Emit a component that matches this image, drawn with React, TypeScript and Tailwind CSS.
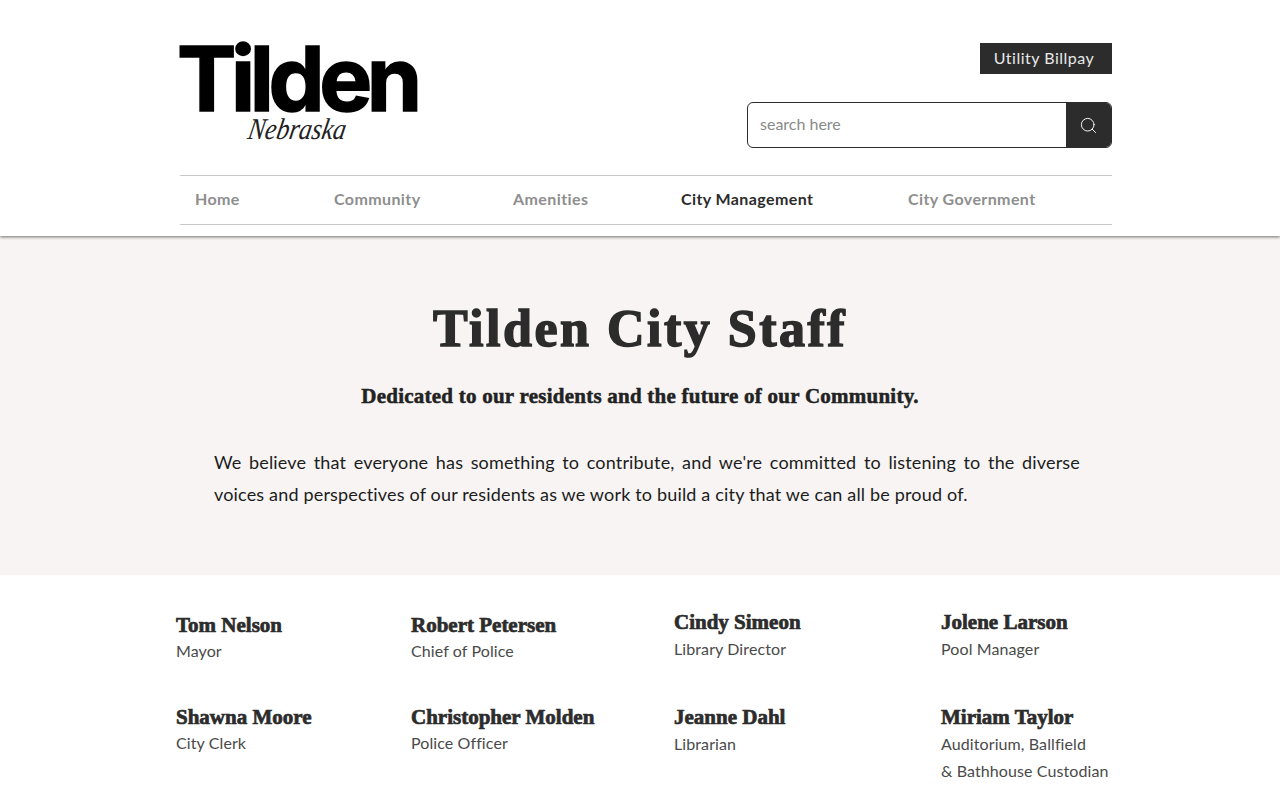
import { Search } from "lucide-react";

const navItems = [
  { label: "Home", width: "w-[139px]" },
  { label: "Community", width: "w-[179px]" },
  { label: "Amenities", width: "w-[168px]" },
  { label: "City Management", width: "w-[227px]", active: true },
  { label: "City Government", width: "w-[204px]" },
];

const staffColumns = [
  {
    width: "w-[235px]",
    top: "pt-[38px]",
    gap: "mb-[41px]",
    nameBox: "leading-[24px]",
    people: [
      { name: "Tom Nelson", role: ["Mayor"] },
      { name: "Shawna Moore", role: ["City Clerk"] },
    ],
  },
  {
    width: "w-[263px]",
    top: "pt-[38px]",
    gap: "mb-[41px]",
    nameBox: "leading-[24px]",
    people: [
      { name: "Robert Petersen", role: ["Chief of Police"] },
      { name: "Christopher Molden", role: ["Police Officer"] },
    ],
  },
  {
    width: "w-[267px]",
    top: "pt-[35px]",
    gap: "mb-[43px]",
    nameBox: "leading-[25px]",
    people: [
      { name: "Cindy Simeon", role: ["Library Director"] },
      { name: "Jeanne Dahl", role: ["Librarian"] },
    ],
  },
  {
    width: "w-[190px]",
    top: "pt-[35px]",
    gap: "mb-[43px]",
    nameBox: "leading-[25px]",
    people: [
      { name: "Jolene Larson", role: ["Pool Manager"] },
      { name: "Miriam Taylor", role: ["Auditorium, Ballfield", "& Bathhouse Custodian"] },
    ],
  },
];

function Logo() {
  return (
    <div className="w-[240px] h-[102px] flex flex-col items-center -ml-[3px]">
      <div className="font-['Inter',sans-serif] font-bold text-[89px] leading-[76px] tracking-[-5.4px] text-black [-webkit-text-stroke:1.5px_#000] whitespace-nowrap">
        Tilden
      </div>
      <div className="font-['Liberation_Serif',serif] italic text-[30px] leading-[30px] text-[#222] -skew-x-12 scale-x-[0.85] -mt-[3px]">
        Nebraska
      </div>
    </div>
  );
}

export default function App() {
  return (
    <div className="min-h-screen h-[800px] overflow-hidden bg-white font-['Lato',sans-serif]">
      <header className="relative z-10 h-[236px] bg-white shadow-[0_1px_3px_rgba(0,0,0,0.55)] pl-[180px] pr-[168px] pt-[41px]">
        <div className="flex justify-between h-[134px]">
          <Logo />
          <div className="flex flex-col items-end pt-[2px]">
            <button className="w-[132px] h-[31px] bg-[#2c2c2c] text-[#e8e8e8] text-[16px] tracking-[0.5px] pr-[4px] pb-[2px]">
              Utility Billpay
            </button>
            <div className="mt-[28px] flex w-[365px] h-[46px] rounded-[6px] border border-[#2c2c2c] overflow-hidden">
              <div className="flex-1 flex items-center pl-[12px] pb-[2px] text-[16px] text-[#8a8a8a]">search here</div>
              <div className="w-[45px] bg-[#2c2c2c] flex items-center justify-center">
                <Search size={19} strokeWidth={1.2} className="text-white" />
              </div>
            </div>
          </div>
        </div>
        <nav className="h-[50px] border-y border-[#c9c9c9] flex items-center pl-[15px] pb-[2px]">
          {navItems.map((item) => (
            <span
              key={item.label}
              className={`${item.width} shrink-0 text-[16px] tracking-[0.4px] font-bold ${item.active ? "text-[#2c2c2c]" : "text-[#8e8e8e]"}`}
            >
              {item.label}
            </span>
          ))}
        </nav>
      </header>

      <section className="h-[339px] bg-[#f7f4f3] flex flex-col items-center pt-[63px]">
        <h1 className="font-['Liberation_Serif',serif] font-bold text-[52px] leading-[60px] tracking-[2.5px] text-[#2c2c2c] [-webkit-text-stroke:1.5px_#2c2c2c]">
          Tilden City Staff
        </h1>
        <h2 className="mt-[23px] font-['Liberation_Serif',serif] font-bold text-[21px] leading-[28px] tracking-[0.24px] text-[#222] [-webkit-text-stroke:0.5px_#222]">
          Dedicated to our residents and the future of our Community.
        </h2>
        <p className="mt-[36px] ml-[14px] w-[866px] text-[18px] leading-[32px] tracking-[0.17px] text-[#1c1c1c] text-justify">
          We believe that everyone has something to contribute, and we're committed to listening to the diverse voices and perspectives of our residents as we work to build a city that we can all be proud of.
        </p>
      </section>

      <section className="flex pl-[176px]">
        {staffColumns.map((col) => (
          <div key={col.people[0].name} className={`${col.width} ${col.top} shrink-0`}>
            {col.people.map((p, i) => (
              <div key={p.name} className={i === 0 ? col.gap : ""}>
                <div className={`font-['Liberation_Serif',serif] font-bold text-[21px] ${col.nameBox} text-[#2c2c2c] [-webkit-text-stroke:0.7px_#2c2c2c]`}>
                  {p.name}
                </div>
                {p.role.map((r) => (
                  <div key={r} className="text-[16px] leading-[27px] tracking-[0.1px] text-[#4a4a4a]">
                    {r}
                  </div>
                ))}
              </div>
            ))}
          </div>
        ))}
      </section>
    </div>
  );
}
